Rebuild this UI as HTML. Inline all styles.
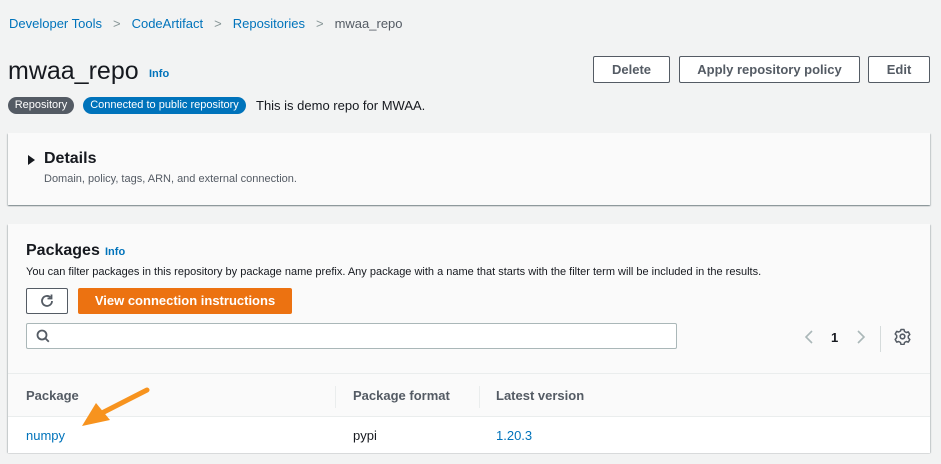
<!DOCTYPE html>
<html><head><style>
body{margin:0;width:941px;height:464px;background:#f2f3f3;font-family:"Liberation Sans",sans-serif;position:relative;overflow:hidden;color:#16191f}
.a{position:absolute}
.bc{top:16px;left:9px;font-size:13px;color:#0073bb}
.bc span.s{color:#879596;margin:0 11px}
.bc span.c{color:#545b64}
.btn{position:absolute;border:1px solid #545b64;border-radius:2px;background:#fff;font-weight:bold;font-size:13px;color:#545b64;text-align:center;box-sizing:border-box;line-height:25px}
.badge{position:absolute;top:97px;height:17px;border-radius:9px;color:#fff;font-size:11px;line-height:17px;text-align:center}
.panel{position:absolute;left:8px;width:922px;background:#fafafa;box-shadow:0 1px 1px rgba(0,28,36,.3),1px 1px 1px rgba(0,28,36,.15),-1px 1px 1px rgba(0,28,36,.15)}
</style></head><body>
<div class="a bc">Developer Tools<span class="s">&gt;</span>CodeArtifact<span class="s">&gt;</span>Repositories<span class="s">&gt;</span><span class="c">mwaa_repo</span></div>
<div class="a" style="top:57px;left:8px;font-size:25px;">mwaa_repo</div>
<div class="a" style="top:68px;left:149px;font-size:11px;color:#0073bb;font-weight:bold">Info</div>
<div class="btn" style="left:593px;top:56px;width:77px;height:27px">Delete</div>
<div class="btn" style="left:679px;top:56px;width:181px;height:27px">Apply repository policy</div>
<div class="btn" style="left:868px;top:56px;width:62px;height:27px">Edit</div>
<div class="badge" style="left:8px;width:66px;background:#545b64">Repository</div>
<div class="badge" style="left:83px;width:163px;background:#0073bb">Connected to public repository</div>
<div class="a" style="top:98px;left:256px;font-size:13px;color:#16191f">This is demo repo for MWAA.</div>

<div class="panel" style="top:133px;height:72px">
 <div class="a" style="left:20px;top:22px;width:0;height:0;border-left:7px solid #16191f;border-top:5px solid transparent;border-bottom:5px solid transparent"></div>
 <div class="a" style="left:36px;top:17px;font-size:16px;font-weight:bold">Details</div>
 <div class="a" style="left:36px;top:40px;font-size:11px;color:#545b64">Domain, policy, tags, ARN, and external connection.</div>
</div>

<div class="panel" style="top:224px;height:228px">
 <div class="a" style="left:18px;top:18px;font-size:16px;font-weight:bold">Packages</div>
 <div class="a" style="left:97px;top:22px;font-size:11px;color:#0073bb;font-weight:bold">Info</div>
 <div class="a" style="left:18px;top:42px;font-size:11px;color:#16191f">You can filter packages in this repository by package name prefix. Any package with a name that starts with the filter term will be included in the results.</div>
 <div class="btn" style="left:18px;top:64px;width:42px;height:26px;line-height:22px">
  <svg width="16" height="16" viewBox="0 0 16 16" style="margin-top:4px"><path d="M13 8a5 5 0 1 1-1.5-3.6" fill="none" stroke="#545b64" stroke-width="1.8"/><path d="M12.5 1.5v4h-4" fill="none" stroke="#545b64" stroke-width="1.8"/></svg></div>
 <div class="a" style="left:70px;top:64px;width:214px;height:26px;background:#ec7211;border-radius:2px;color:#fff;font-weight:bold;font-size:13px;text-align:center;line-height:26px">View connection instructions</div>
 <div class="a" style="left:18px;top:99px;width:651px;height:26px;background:#fff;border:1px solid #aab7b8;border-radius:2px;box-sizing:border-box">
  <svg class="a" style="left:9px;top:5px" width="14" height="14" viewBox="0 0 14 14"><circle cx="6" cy="6" r="4.5" fill="none" stroke="#545b64" stroke-width="1.8"/><path d="M9.3 9.3l3.5 3.5" stroke="#545b64" stroke-width="1.8"/></svg></div>
 <svg class="a" style="left:795px;top:105px" width="12" height="16"><path d="M9 2L3 8l6 6" fill="none" stroke="#aab7b8" stroke-width="1.6"/></svg>
 <div class="a" style="left:823px;top:106px;font-size:13px;font-weight:bold">1</div>
 <svg class="a" style="left:847px;top:105px" width="12" height="16"><path d="M3 2l6 6-6 6" fill="none" stroke="#aab7b8" stroke-width="1.6"/></svg>
 <div class="a" style="left:872px;top:102px;width:1px;height:26px;background:#d5dbdb"></div>
 <svg class="a" style="left:886px;top:104px" width="17" height="17" viewBox="0 0 17 17"><circle cx="8.5" cy="8.5" r="2.3" fill="none" stroke="#545b64" stroke-width="1.6"/><path d="M7 1.5h3l.5 2 1.8 1 2-.6 1.5 2.6-1.5 1.5v2l1.5 1.5-1.5 2.6-2-.6-1.8 1-.5 2H7l-.5-2-1.8-1-2 .6-1.5-2.6L2.7 9.5v-2L1.2 6l1.5-2.6 2 .6 1.8-1z" fill="none" stroke="#545b64" stroke-width="1.5" stroke-linejoin="round"/></svg>
 <div class="a" style="left:0;top:149px;width:922px;height:1px;background:#eaeded"></div>
 <div class="a" style="left:18px;top:164px;font-size:13px;font-weight:bold;color:#545b64">Package</div>
 <div class="a" style="left:327px;top:162px;width:1px;height:22px;background:#eaeded"></div>
 <div class="a" style="left:345px;top:164px;font-size:13px;font-weight:bold;color:#545b64">Package format</div>
 <div class="a" style="left:471px;top:162px;width:1px;height:22px;background:#eaeded"></div>
 <div class="a" style="left:488px;top:164px;font-size:13px;font-weight:bold;color:#545b64">Latest version</div>
 <div class="a" style="left:0;top:192px;width:922px;height:36px;background:#fff;border-top:1px solid #eaeded"></div>
 <div class="a" style="left:18px;top:204px;font-size:13px;color:#0073bb">numpy</div>
 <div class="a" style="left:345px;top:204px;font-size:13px">pypi</div>
 <div class="a" style="left:488px;top:204px;font-size:13px;color:#0073bb">1.20.3</div>
</div>
<svg class="a" style="left:0;top:0" width="941" height="464"><path d="M147 390 L100 414" stroke="#f7931e" stroke-width="5" stroke-linecap="round"/><path d="M82 426 L96 403 L110 420 Z" fill="#f7931e"/></svg>
</body></html>
